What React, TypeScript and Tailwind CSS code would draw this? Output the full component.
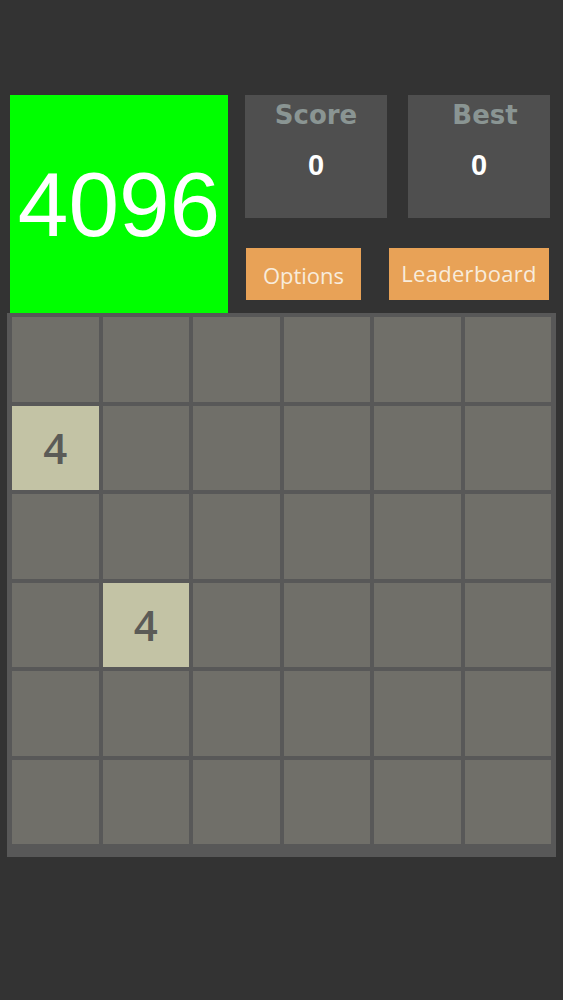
import React from "react";

// value per cell, 0 = empty
const board: number[][] = [
  [0, 0, 0, 0, 0, 0],
  [4, 0, 0, 0, 0, 0],
  [0, 0, 0, 0, 0, 0],
  [0, 4, 0, 0, 0, 0],
  [0, 0, 0, 0, 0, 0],
  [0, 0, 0, 0, 0, 0],
];

function StatBox({ label, value, shift }: { label: string; value: number; shift?: boolean }) {
  return (
    <div className="w-[142px] h-[123px] bg-[#4f4f4f] flex flex-col items-center">
      <div
        className={`text-[26px] font-bold text-[#8a9593] leading-none mt-[7px] ${shift ? "pl-[12px]" : ""}`}
        style={{ fontFamily: '"DejaVu Sans", sans-serif' }}
      >
        {label}
      </div>
      <div
        className="text-[29px] font-bold text-white leading-none mt-[23px]"
        style={{ fontFamily: '"Liberation Sans", Arial, sans-serif' }}
      >
        {value}
      </div>
    </div>
  );
}

export default function App() {
  return (
    <div
      className="min-h-[1000px] w-full bg-[#333333]"
      style={{ fontFamily: '"Open Sans", sans-serif' }}
    >
      <div className="flex pt-[95px] pl-[10px]">
        {/* Goal tile */}
        <div className="w-[218px] h-[218px] bg-[#00ff00] flex items-center justify-center">
          <span
            className="text-white text-[91px] leading-none"
            style={{ fontFamily: '"Liberation Sans", Arial, sans-serif' }}
          >
            4096
          </span>
        </div>

        <div className="flex flex-col ml-[17px]">
          <div className="flex gap-[21px]">
            <StatBox label="Score" value={0} />
            <StatBox label="Best" value={0} shift />
          </div>
          <div className="flex mt-[30px]">
            <button className="ml-[1px] w-[115px] h-[52px] bg-[#e8a257] text-[#f8ecdc] text-[22px] pt-[3px]">
              Options
            </button>
            <button className="ml-[28px] w-[160px] h-[52px] bg-[#e8a257] text-[#f8ecdc] text-[22px] tracking-[0.3px] pb-[2px]">
              Leaderboard
            </button>
          </div>
        </div>
      </div>

      {/* Board */}
      <div className="ml-[7px] w-[549px] bg-[#585858] pt-[4px] px-[5px] pb-[13px]">
        <div className="grid grid-cols-6 gap-[4px]">
          {board.flat().map((v, i) => (
            <div
              key={i}
              className={`h-[84.5px] flex items-center justify-center ${
                v ? "bg-[#c3c3a5]" : "bg-[#706f69]"
              }`}
            >
              {v > 0 && (
                <span className="text-[#5b5b57] text-[42px] font-semibold leading-none">
                  {v}
                </span>
              )}
            </div>
          ))}
        </div>
      </div>
    </div>
  );
}
